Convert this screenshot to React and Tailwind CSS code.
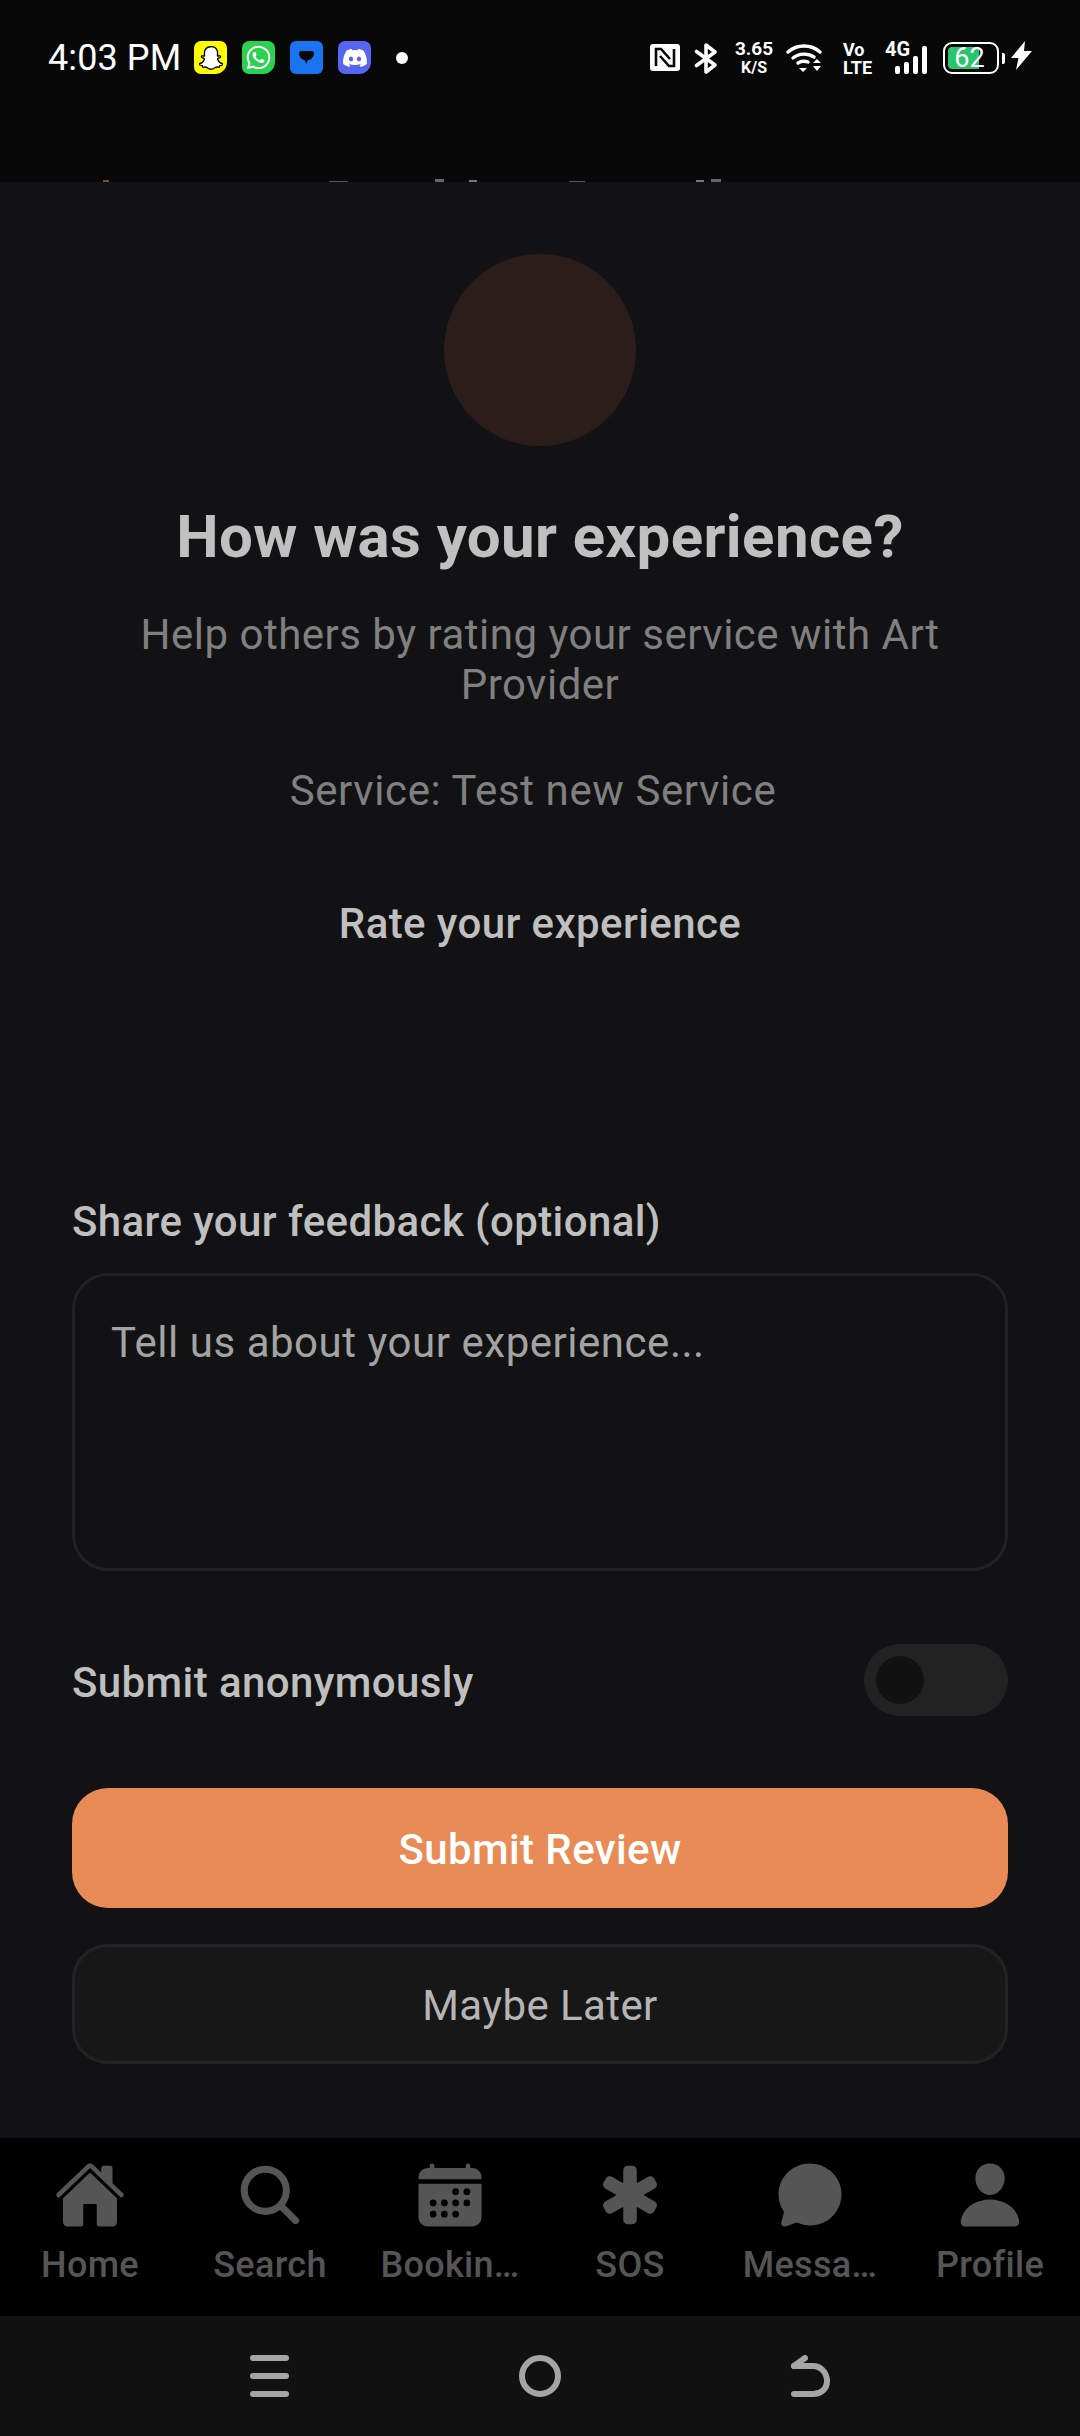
import { FaDiscord, FaSnapchatGhost, FaWhatsapp } from "react-icons/fa"
import { IoCalendar, IoChatbubble, IoHome, IoMedical, IoPerson, IoSearch } from "react-icons/io5"

const tabs = [
    { label: "Home", icon: IoHome },
    { label: "Search", icon: IoSearch },
    { label: "Bookin…", icon: IoCalendar },
    { label: "SOS", icon: IoMedical },
    { label: "Messa…", icon: IoChatbubble },
    { label: "Profile", icon: IoPerson },
]

// bits of the scrolled page title that stick out under the status bar
const clippedBits = [
    { cls: "left-[103px] top-[180px] w-[6px] h-[2px] bg-[#7a4a30]" },
    { cls: "left-[329px] top-[181px] w-[19px] h-[1px] bg-[#555555]" },
    { cls: "left-[435px] top-[179px] w-[9px] h-[3px] bg-[#666666]" },
    { cls: "left-[469px] top-[180px] w-[8px] h-[2px] bg-[#777777]" },
    { cls: "left-[569px] top-[181px] w-[16px] h-[1px] bg-[#555555]" },
    { cls: "left-[696px] top-[180px] w-[8px] h-[2px] bg-[#777777]" },
    { cls: "left-[711px] top-[179px] w-[10px] h-[3px] bg-[#666666]" },
]

const NfcIcon = () => (
    <svg width="30" height="27" viewBox="0 0 30 27">
        <rect width="30" height="27" rx="3" fill="#fff" />
        <path d="M6 22V5h5l9 10M24 5v17h-5l-9-10" fill="none" stroke="#080808" strokeWidth="2.6" />
    </svg>
)

const BluetoothIcon = () => (
    <svg width="24" height="31" viewBox="0 0 24 31" fill="none" stroke="#fff" strokeWidth="3.6" strokeLinecap="round" strokeLinejoin="round">
        <path d="M2.5 8.5L21 22l-9 7V2l9 7L2.5 22.5" />
    </svg>
)

const WifiIcon = () => (
    <svg width="36" height="30" viewBox="0 0 36 30" fill="none" stroke="#fff" strokeWidth="3.4" strokeLinecap="round">
        <path d="M2 9c9-8 23-8 32 0" />
        <path d="M7 15c6-5 15-5 21-1" />
        <path d="M12 20c3-2 7-2 10-1" />
        <path d="M13 25h8l-4 4z" fill="#fff" stroke="none" />
        <path d="M27 20l4-4 4 4zM27 23h8l-4 5z" fill="#fff" stroke="none" />
    </svg>
)

const BoltIcon = () => (
    <svg width="21" height="29" viewBox="0 0 21 29">
        <path d="M14 0L0 17h7.5L5 29 21 10h-8z" fill="#fff" />
    </svg>
)

const BlueChatIcon = () => (
    <svg width="15" height="13" viewBox="0 0 15 13">
        <path d="M2 0h11c1 0 2 1 2 2.500S13.500 8 11 8.500L8.500 9.500 7.500 13 6 9.500 4 8.500C1.500 8 0 4 0 2.500S1 0 2 0z" fill="#080808" />
    </svg>
)

const StatusBar = () => (
    <div className="h-[182px] bg-[#080808] flex justify-between items-start pt-[41px] pl-[48px] pr-[48px]">
        <div className="flex items-center h-[33px]">
            <div className="text-[36px] leading-[33px] text-white w-[146px] tracking-[0.1px] pt-[1px]">4:03 PM</div>
            <div className="flex items-center gap-[15px]">
                <div className="w-[33px] h-[33px] rounded-[7px] rounded-br-[12px] bg-[#fffc00] flex items-center justify-center">
                    <FaSnapchatGhost size={24} color="#fff" stroke="#000" strokeWidth={28} />
                </div>
                <div className="w-[33px] h-[33px] rounded-[7px] rounded-br-[12px] bg-[#2cd14f] flex items-center justify-center">
                    <FaWhatsapp size={27} color="#fff" />
                </div>
                <div className="w-[33px] h-[33px] rounded-[6px] bg-[#1a73f0] flex items-center justify-center">
                    <BlueChatIcon />
                </div>
                <div className="w-[33px] h-[33px] rounded-[7px] rounded-br-[12px] bg-[#5865f2] flex items-center justify-center">
                    <FaDiscord size={26} color="#fff" />
                </div>
            </div>
            <div className="w-[12px] h-[12px] rounded-full bg-white ml-[25px]"></div>
        </div>
        <div className="flex items-start text-white font-medium">
            <div className="mt-[3px]"><NfcIcon /></div>
            <div className="mt-[2px] ml-[14px]"><BluetoothIcon /></div>
            <div className="ml-[16px] w-[40px] -mt-[2px] flex flex-col items-center">
                <div className="text-[19px] leading-[19px] font-bold">3.65</div>
                <div className="text-[16px] leading-[16px] font-bold mt-[2px]">K/S</div>
            </div>
            <div className="ml-[12px] mt-[2px]"><WifiIcon /></div>
            <div className="ml-[21px] w-[30px] -mt-[1px] flex flex-col items-start">
                <div className="text-[18px] leading-[19px] font-bold">Vo</div>
                <div className="text-[18px] leading-[17px] font-bold">LTE</div>
            </div>
            <div className="ml-[12px] w-[42px] relative h-[33px]">
                <div className="text-[20px] leading-[17px] font-bold">4G</div>
                <div className="absolute bottom-0 right-0 flex items-end gap-[4px]">
                    <div className="w-[5px] h-[8px] rounded-[2px] bg-white"></div>
                    <div className="w-[5px] h-[12px] rounded-[2px] bg-white"></div>
                    <div className="w-[5px] h-[18px] rounded-[2px] bg-white"></div>
                    <div className="w-[5px] h-[28px] rounded-[2px] bg-white"></div>
                </div>
            </div>
            <div className="ml-[16px] mt-[1px] flex items-center">
                <div className="relative w-[56px] h-[32px] rounded-[9px] border-[2px] border-white p-[3px] overflow-hidden">
                    <div className="w-[31px] h-full rounded-l-[4px] bg-[#29c46c]"></div>
                    <div className="absolute inset-0 flex items-center justify-center pr-[3px] text-[27px] font-normal leading-none">62</div>
                </div>
                <div className="w-[3px] h-[11px] bg-white rounded-r-[2px] ml-[3px]"></div>
            </div>
            <div className="ml-[6px]"><BoltIcon /></div>
        </div>
    </div>
)

const TabBar = () => (
    <div className="h-[178px] bg-black flex pt-[21px]">
        {tabs.map((tab) => (
            <div key={tab.label} className="w-[180px] flex flex-col items-center">
                <tab.icon size={72} color="#555555" />
                <div className="text-[36px] leading-[42px] font-medium tracking-[0.3px] text-[#555555] mt-[13px]">{tab.label}</div>
            </div>
        ))}
    </div>
)

const NavBar = () => (
    <div className="h-[120px] bg-[#111111] flex items-center justify-center gap-[230px]">
        <div className="w-[39px] flex flex-col gap-[12px]">
            <div className="h-[6px] rounded-full bg-[#a5a5a5]"></div>
            <div className="h-[6px] rounded-full bg-[#a5a5a5]"></div>
            <div className="h-[6px] rounded-full bg-[#a5a5a5]"></div>
        </div>
        <div className="w-[42px] h-[42px] rounded-full border-[6px] border-[#a5a5a5]"></div>
        <svg width="39" height="42" viewBox="0 0 39 42" fill="none" stroke="#a5a5a5" strokeWidth="6" strokeLinecap="round">
            <path d="M3 39h19c8 0 14-5 14-13S30 11 22 11H3" />
            <path d="M3 11l11-8" />
        </svg>
    </div>
)

export default function App() {
    return (
        <div className="relative w-[1080px] h-[2436px] flex flex-col bg-[#121214] overflow-hidden font-['Roboto',sans-serif]">
            <StatusBar />
            {clippedBits.map((bit) => (
                <div key={bit.cls} className={`absolute ${bit.cls}`}></div>
            ))}

            <div className="flex-1 flex flex-col px-[72px] tracking-[0.4px]">
                <div className="w-[192px] h-[192px] rounded-full bg-[#2b1e1a] self-center mt-[72px]"></div>
                <div className="text-[60px] leading-[72px] font-bold text-[#c0c0c0] text-center mt-[55px]">How was your experience?</div>
                <div className="w-[840px] self-center text-[42px] leading-[50px] tracking-[0.5px] text-[#808080] text-center mt-[37px]">
                    Help others by rating your service with Art Provider
                </div>
                <div className="text-[42px] leading-[50px] tracking-[0.6px] text-[#808080] text-center mt-[56px] pr-[14px]">Service: Test new Service</div>
                <div className="text-[42px] leading-[50px] font-medium text-[#bfbfbf] text-center mt-[83px]">Rate your experience</div>
                <div className="text-[42px] leading-[50px] font-medium text-[#bfbfbf] mt-[248px]">Share your feedback (optional)</div>
                <div className="h-[298px] mt-[26px] rounded-[36px] border-[3px] border-[#222222] px-[36px] pt-[42px] text-[42px] leading-[50px] tracking-[0.53px] text-[#a3a3a3]">
                    Tell us about your experience...
                </div>
                <div className="flex items-center justify-between mt-[73px]">
                    <div className="text-[42px] leading-[50px] font-medium text-[#bfbfbf] pt-[5px]">Submit anonymously</div>
                    <div className="w-[144px] h-[72px] rounded-full bg-[#222222] flex items-center pl-[12px]">
                        <div className="w-[48px] h-[48px] rounded-full bg-[#111111]"></div>
                    </div>
                </div>
                <div className="h-[120px] mt-[72px] rounded-[36px] bg-[#e88b56] flex items-center justify-center pt-[2px] text-[42px] font-medium text-white">Submit Review</div>
                <div className="h-[120px] mt-[36px] rounded-[36px] bg-[#171717] border-[3px] border-[#222222] flex items-center justify-center pt-[2px] text-[42px] text-[#b5b5b5]">Maybe Later</div>
            </div>

            <TabBar />
            <NavBar />
        </div>
    )
}
